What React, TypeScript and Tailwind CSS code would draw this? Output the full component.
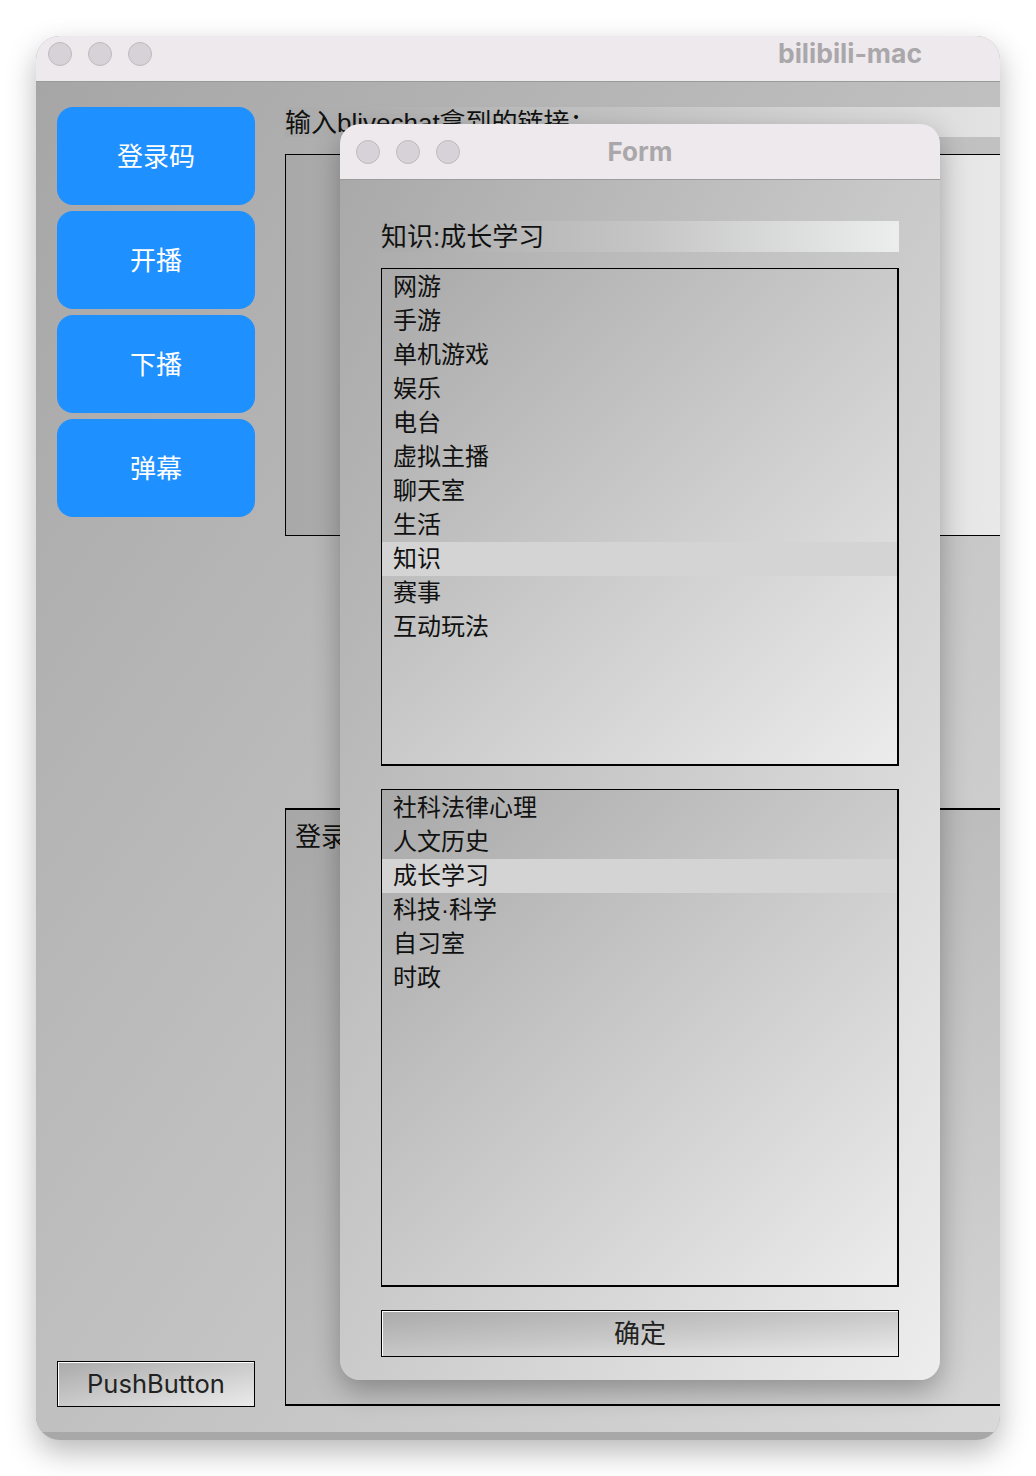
import React from 'react';

const cjk = { fontFamily: '"Liberation Sans", "Noto Sans CJK SC", sans-serif' };
const ui = { fontFamily: 'Inter, "Noto Sans", "Liberation Sans", sans-serif' };

const mainCategories = ['网游', '手游', '单机游戏', '娱乐', '电台', '虚拟主播', '聊天室', '生活', '知识', '赛事', '互动玩法'];
const subCategories = ['社科法律心理', '人文历史', '成长学习', '科技·科学', '自习室', '时政'];

function Lights({ className = '' }: { className?: string }) {
  return (
    <div className={`flex items-center gap-4 ${className}`}>
      {[0, 1, 2].map((i) => (
        <span key={i} className="block w-6 h-6 rounded-full bg-[#d7d2d7] border border-[#bdb9bd]" />
      ))}
    </div>
  );
}

function SideButton({ label }: { label: string }) {
  return (
    <div className="h-[98px] rounded-[16px] bg-[#1e90ff] flex items-center justify-center text-white text-[26px] pt-[2px]" style={cjk}>
      {label}
    </div>
  );
}

function ListBox({ items, selected, className = '' }: { items: string[]; selected: number; className?: string }) {
  return (
    <div className={`border-black border-l border-t border-r-2 border-b-2 bg-gradient-to-br from-[#a8a9a8] to-[#ebeceb] pt-px ${className}`}>
      {items.map((t, i) => (
        <div
          key={t}
          className={`h-[34px] flex items-center pl-[11px] text-[24px] text-[#111] ${i === selected ? 'bg-[#d4d4d4]' : ''}`}
          style={cjk}
        >
          {t}
        </div>
      ))}
    </div>
  );
}

export default function App() {
  return (
    <div className="w-[1036px] h-[1476px] bg-white relative overflow-hidden">
      {/* main window */}
      <div className="absolute left-[36px] top-[36px] w-[964px] h-[1404px] rounded-[24px] overflow-hidden shadow-[0_12px_30px_rgba(0,0,0,0.28)] flex flex-col bg-[#a8a8a8]">
        <div className="h-[46px] bg-[#eee9ed] border-b border-[#9a9a9a] flex items-start justify-between pl-[12px] pr-[78px] pt-[6px] shrink-0">
          <Lights />
          <span className="text-[26.5px] leading-[22px] font-bold text-[#aaa7aa]" style={ui}>bilibili-mac</span>
        </div>
        <div className="h-[1350px] flex bg-gradient-to-br from-[#a5a6a5] via-[#bfc0bf] to-[#d8d9d8] pt-[25px] pl-[21px] shrink-0">
          <div className="w-[198px] flex flex-col">
            <div className="flex flex-col gap-[6px]">
              <SideButton label="登录码" />
              <SideButton label="开播" />
              <SideButton label="下播" />
              <SideButton label="弹幕" />
            </div>
            <div className="mt-auto mb-[25px] h-[46px] border border-black shadow-[inset_1px_1px_0_#fff] bg-gradient-to-br from-[#a9aaa9] to-[#eaebea] flex items-center justify-center text-[25.5px] text-[#222]" style={ui}>
              PushButton
            </div>
          </div>
          <div className="flex-1 ml-[30px] flex flex-col">
            <div className="h-[30px] bg-gradient-to-r from-[#a9aaa9] to-[#e2e3e2] text-[26px] text-[#111] leading-[32px] whitespace-nowrap" style={cjk}>
              输入blivechat拿到的链接：
            </div>
            <div className="mt-[17px] h-[382px] border-y border-l border-black bg-gradient-to-r from-[#a7a8a7] to-[#e8e9e8]" />
            <div className="mt-[272px] h-[598px] border-y-2 border-l border-black bg-gradient-to-br from-[#a6a7a6] to-[#d3d4d3] px-[9px] pt-[8px]">
              <span className="text-[26px] text-[#111]" style={cjk}>登录</span>
            </div>
          </div>
        </div>
      </div>

      {/* Form dialog */}
      <div className="absolute left-[340px] top-[124px] w-[600px] h-[1256px] rounded-[20px] overflow-hidden shadow-[0_10px_28px_rgba(0,0,0,0.3)] flex flex-col">
        <div className="h-[56px] bg-[#eee9ed] border-b border-[#9c9c9c] relative flex items-center pl-[16px] shrink-0">
          <Lights />
          <span className="absolute left-0 right-0 text-center text-[26px] font-bold text-[#aaa7aa] pointer-events-none" style={ui}>
            Form
          </span>
        </div>
        <div className="flex-1 bg-gradient-to-br from-[#a8a9a8] to-[#ecedec] px-[41px] pt-[41px] flex flex-col">
          <div className="h-[31px] bg-gradient-to-r from-[#a9aaa9] via-[#c4c5c4] to-[#eceded] text-[26px] text-[#111] leading-[33px]" style={cjk}>
            知识:成长学习
          </div>
          <ListBox items={mainCategories} selected={8} className="mt-[16px] h-[498px]" />
          <ListBox items={subCategories} selected={2} className="mt-[23px] h-[498px]" />
          <div className="mt-[23px] h-[47px] border border-black shadow-[inset_1px_1px_0_#fff] bg-gradient-to-br from-[#a9aaa9] via-[#c6c7c6] to-[#eaebea] flex items-center justify-center text-[26px] text-[#222] pt-[2px]" style={cjk}>
            确定
          </div>
        </div>
      </div>
    </div>
  );
}
